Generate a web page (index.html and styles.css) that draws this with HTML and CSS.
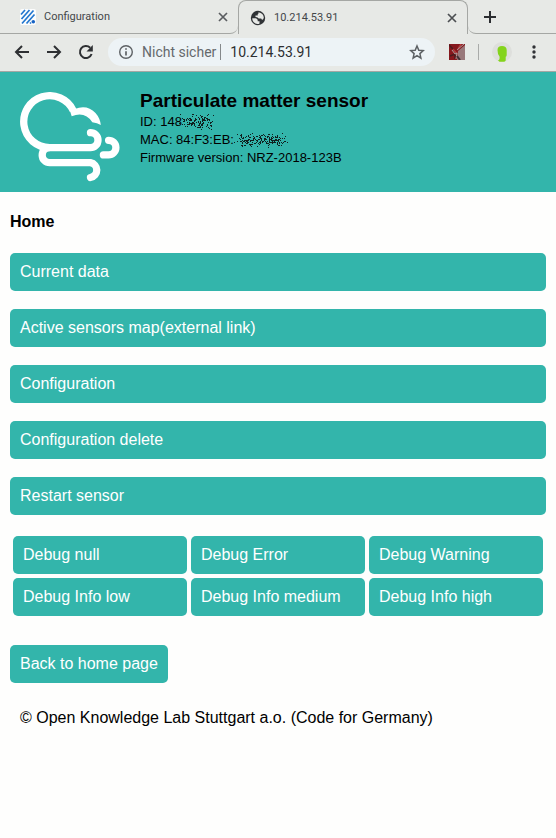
FILE: index.html
```html
<!DOCTYPE html>
<html lang="en">
<head>
<meta charset="utf-8">
<title>Particulate matter sensor</title>
<link rel="stylesheet" href="styles.css">
</head>
<body>
<div class="browser">
  <div class="tabs">
    <div class="tab tab-idle">
      <svg class="icon16" viewBox="0 0 16 16" aria-hidden="true"><rect width="16" height="16" rx="2" fill="#fcfdfd"/><path d="M1 5.500L5 1M1.500 10L9.500 1M2 14.500L13.500 1.500M6.500 14.500L14.500 5.500M10 14.500L11 13.500" stroke="#2377cf" stroke-width="1.700" fill="none"/><circle cx="13.300" cy="12.800" r="1.800" fill="#1762c4"/></svg>
      <span class="tab-title">Configuration</span>
      <button class="plain" aria-label="Close Configuration"><svg class="icon10" viewBox="0 0 10 10"><path d="M1 1L9 9M9 1L1 9" stroke="#5a5d60" stroke-width="1.700"/></svg></button>
    </div>
    <div class="tab tab-active">
      <svg class="icon16" viewBox="0 0 16 16" aria-hidden="true"><circle cx="8" cy="8" r="7.200" fill="#303336"/><path d="M2.200 8.200h3.500q2 .3 2 2v1h1.800v2.200q-1 .8-2.200.5Q2.200 12.800 2.200 8.200zM8.500 2.200Q13.400 3 13.800 7.500q-.3 2-1.200 2.200-1 0-1.400-1.200H8.700L7.200 7.200 5.500 7V5.600h2.200V4.200l.8-.8z" fill="#e8eae7"/></svg>
      <span class="tab-title">10.214.53.91</span>
      <button class="plain" aria-label="Close 10.214.53.91"><svg class="icon10" viewBox="0 0 10 10"><path d="M1 1L9 9M9 1L1 9" stroke="#4c4f52" stroke-width="1.700"/></svg></button>
    </div>
    <div class="tab-rest">
      <button class="plain" aria-label="New tab"><svg class="icon12" viewBox="0 0 12 12"><path d="M6 0V12M0 6H12" stroke="#2b2d30" stroke-width="2"/></svg></button>
    </div>
  </div>
  <div class="toolbar">
    <button class="plain" aria-label="Back"><svg class="icon16" viewBox="0 0 16 16"><path d="M15 8H2.500M8 2L2 8l6 6" fill="none" stroke="#2e3033" stroke-width="2"/></svg></button>
    <button class="plain" aria-label="Forward"><svg class="icon16" viewBox="0 0 16 16"><path d="M1 8H13.500M8 2l6 6-6 6" fill="none" stroke="#2e3033" stroke-width="2"/></svg></button>
    <button class="plain" aria-label="Reload"><svg class="icon16" viewBox="0 0 16 16"><path d="M13.600 10A6 6 0 1 1 12.200 3.800" fill="none" stroke="#2e3033" stroke-width="2"/><path d="M14.800 1v6.500H8.500z" fill="#2e3033"/></svg></button>
    <div class="address">
      <svg class="icon16" viewBox="0 0 16 16" aria-hidden="true"><circle cx="8" cy="8" r="6.300" fill="none" stroke="#5e6265" stroke-width="1.400"/><path d="M8 7.200V11.500M8 4.200V5.800" stroke="#5e6265" stroke-width="1.700"/></svg>
      <span class="security">Nicht sicher</span>
      <input class="url" type="text" aria-label="Address" value="10.214.53.91">
      <button class="plain" aria-label="Bookmark"><svg class="icon16" viewBox="0 0 16 16"><path d="M8 2l1.800 4.200 4.500.4-3.400 3 1 4.500L8 11.700l-3.900 2.400 1-4.500-3.400-3 4.500-.4z" fill="none" stroke="#5c6063" stroke-width="1.500"/></svg></button>
    </div>
    <svg class="icon16 extension" viewBox="0 0 16 16" aria-hidden="true"><path fill="#86181d" d="M0 0h16v16H0z"/><path d="M16 1L9 7l-1 9h8z" fill="#99797b"/><path d="M0 1l5 5M1 12l5-2v5" stroke="#4a1c1e" stroke-width="1.500" fill="none"/><path d="M4 5l4 5M12 0L9 5" stroke="#b43b3d" stroke-width="1.500"/><path d="M3 6l3 4 2-1-1 6M15 0L8 6" fill="none" stroke="#ae9d9b"/><path d="M8 12l3 4" stroke="#413034" stroke-width="2"/></svg>
    <span class="divider"></span>
    <svg class="avatar" viewBox="0 0 20 20" aria-hidden="true"><circle cx="10" cy="10" r="10" fill="#dedfdc"/><path d="M5.500 8Q5.500 4 10 4t4.700 4v5q0 1.500-1 1.700V18.500q-.5 1.200-2 1.200H7.500L6 18.500q2-.5 1.500-4Q5.500 12.500 5.500 8z" fill="#84d41c"/></svg>
    <button class="plain menu" aria-label="Menu"><svg class="icon16" viewBox="0 0 16 16"><g fill="#303236"><circle cx="8" cy="3" r="1.700"/><circle cx="8" cy="8" r="1.700"/><circle cx="8" cy="13" r="1.700"/></g></svg></button>
  </div>
</div>
<header class="banner">
  <svg class="logo" viewBox="20 92 100 90" aria-hidden="true">
    <g fill="none" stroke="#fff" stroke-width="7.300" stroke-linecap="round">
      <path d="M49.700 147.700A26 26 0 1 1 73.200 110.500" stroke-linecap="butt"/>
      <path d="M90.500 132.700a7.500 7.500 0 0 1 0 15H49.700a7.500 7.500 0 0 0 0 15h40.800a7.500 7.500 0 0 1 0 14.800"/>
      <path d="M108.600 140.300a7.300 7.300 0 0 1 0 14.600h-5.200"/>
    </g>
    <path d="M71.700 116.300L70 111l4.700-2Q87 104 95.500 113q4.500 5 5.300 12-3.500-2-8.500-2.700Q85 111 71.700 116.300z" fill="#fff"/>
  </svg>
  <div class="info">
    <h1>Particulate matter sensor</h1>
    <p>ID: 148<svg class="smudge smudge-id" width="37" height="18" data-seed="7"></svg></p>
    <p>MAC: 84:F3:EB:<svg class="smudge" width="56" height="18" data-seed="23"></svg></p>
    <p>Firmware version: NRZ-2018-123B</p>
  </div>
</header>
<main class="content">
  <h2>Home</h2>
  <nav class="links">
    <a class="button" href="#values">Current data</a>
    <a class="button" href="#map">Active sensors map(external link)</a>
    <a class="button" href="#config">Configuration</a>
    <a class="button" href="#delete">Configuration delete</a>
    <a class="button" href="#restart">Restart sensor</a>
  </nav>
  <nav class="debug">
    <a class="button" href="#debug0">Debug null</a>
    <a class="button" href="#debug1">Debug Error</a>
    <a class="button" href="#debug2">Debug Warning</a>
    <a class="button" href="#debug3">Debug Info low</a>
    <a class="button" href="#debug4">Debug Info medium</a>
    <a class="button" href="#debug5">Debug Info high</a>
  </nav>
  <a class="button home" href="#home">Back to home page</a>
</main>
<footer>© Open Knowledge Lab Stuttgart a.o. (Code for Germany)</footer>
<script src="smudge.js"></script>
</body>
</html>
```

FILE: styles.css
```css
* { box-sizing: border-box; }
body {
  margin: 0;
  background: #fefefd;
  color: #000;
  font: 16px/18px "Liberation Sans", Arial, sans-serif;
}
h1, h2, p { margin: 0; }
svg { display: block; flex: none; }
.icon10 { width: 10px; height: 10px; }
.icon12 { width: 12px; height: 12px; }
.icon16 { width: 16px; height: 16px; }
.plain {
  flex: none;
  padding: 0;
  border: 0;
  background: none;
}

.browser {
  background: #e7e9e6;
  border-bottom: 1px solid #a5a7a4;
  font-family: Roboto, "Noto Sans", sans-serif;
}
.tabs { display: flex; height: 34px; }
.tab {
  display: flex;
  align-items: center;
  gap: 8px;
  padding: 0 10px 0 20px;
  font-size: 11px;
  color: #44474a;
}
.tab-idle {
  flex: 0 1 238px;
  border-bottom: 1px solid #a5a7a4;
  border-bottom-right-radius: 8px;
}
.tab-active {
  flex: 0 1 230px;
  padding: 0 10px 0 11px;
  border: 1px solid #a5a7a4;
  border-bottom: 0;
  border-radius: 8px 8px 0 0;
}
.tab-title { flex: 1; }
.tab-rest {
  flex: 1;
  display: flex;
  align-items: center;
  padding-left: 16px;
  border-bottom: 1px solid #a5a7a4;
  border-bottom-left-radius: 8px;
}
.toolbar {
  display: flex;
  align-items: center;
  height: 37px;
  padding: 0 14px 1px;
  gap: 16px;
}
.address {
  flex: 1;
  display: flex;
  align-items: center;
  height: 28px;
  margin-left: -2px;
  padding: 0 10px;
  border-radius: 14px;
  background: #edf3f6;
  font-size: 14px;
}
.security {
  flex: none;
  margin-left: 8px;
  padding-right: 4px;
  border-right: 1px solid #85898b;
  line-height: 16px;
  color: #65696c;
}
.url {
  flex: 1;
  min-width: 0;
  padding: 0 0 0 9px;
  border: 0;
  background: none;
  font: inherit;
  color: #2c2e31;
}
.extension { margin-left: -2px; }
.divider {
  width: 1px;
  height: 16px;
  margin: 0 -3px;
  background: #a9aba9;
}
.avatar { width: 20px; height: 20px; }
.menu { margin: 0 0 0 -2px; }

.banner {
  display: flex;
  gap: 20px;
  min-height: 120px;
  padding: 20px 20px 10px;
  background: #33b5ab;
}
.logo { width: 100px; height: 90px; }
.info { font-size: 13px; }
.info h1 { margin-bottom: 3px; font-size: 19px; line-height: 18px; }
.info p { display: flex; align-items: center; height: 18px; }
.smudge { overflow: visible; }
.smudge-id { margin-left: -4px; }

.content { padding: 20px 10px 0; }
h2 { font-size: 16px; line-height: 20px; }
.button {
  display: block;
  padding: 10px;
  border-radius: 5px;
  background: #33b5ab;
  color: #fff;
  text-decoration: none;
}
.links { display: grid; gap: 18px; margin-top: 21px; }
.debug {
  display: grid;
  grid-template-columns: repeat(3, 1fr);
  gap: 4px;
  margin: 21px 3px 29px;
}
.home { width: fit-content; }
footer { padding: 26px 20px; }
```

FILE: smudge.js
```js
// Scatters dark pixels over the private digits of the ID and MAC address.
document.querySelectorAll(".smudge").forEach(function (svg) {
  var seed = Number(svg.dataset.seed);
  function random() {
    seed = (seed * 16807) % 2147483647;
    return seed / 2147483647;
  }
  for (var i = 0; i < 20; i++) random();
  var width = Number(svg.getAttribute("width"));
  var d = "";
  for (var n = 0; n < width * 4; n++) {
    var x = Math.floor((random() * 0.7 + random() * 0.3) * width);
    var y = Math.floor((random() + random() + random()) / 3 * 18);
    d += "M" + x + " " + y + "h1v1h-1z";
  }
  var path = document.createElementNS("http://www.w3.org/2000/svg", "path");
  path.setAttribute("d", d);
  path.setAttribute("fill", "#10201f");
  svg.appendChild(path);
});
```
